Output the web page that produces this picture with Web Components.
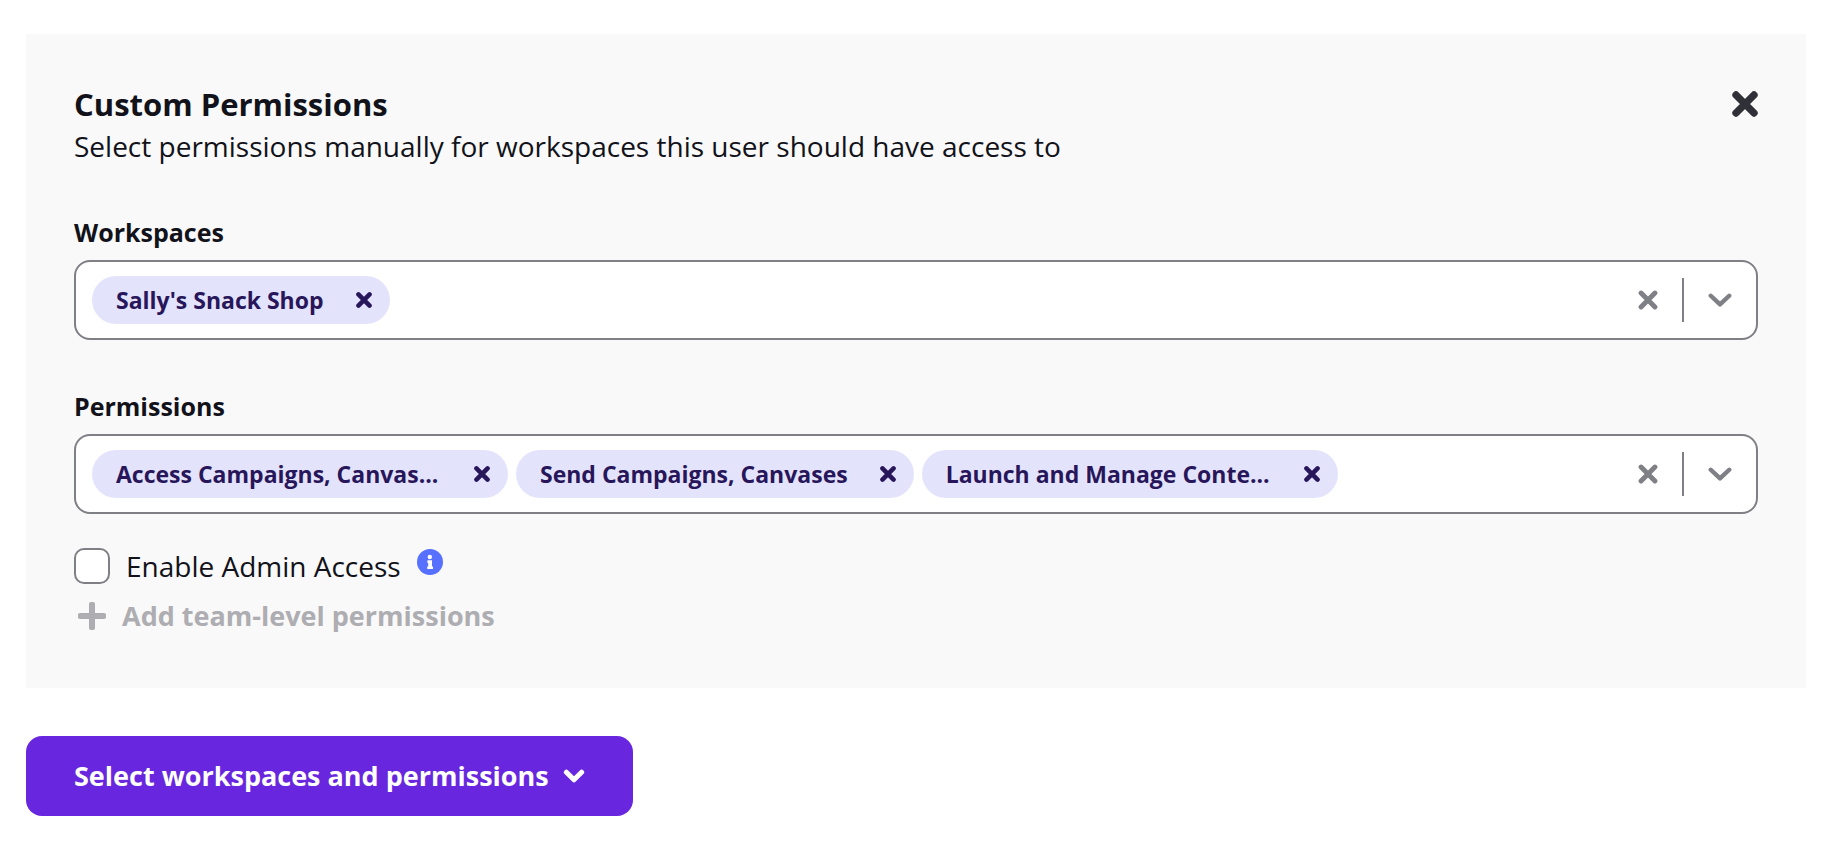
<!DOCTYPE html>
<html lang="en">
<head>
<meta charset="utf-8">
<title>Custom Permissions</title>
<style>
  body {
    margin: 0;
    background: #fff;
    color: #12121a;
    font-family: "Open Sans", "Noto Sans", sans-serif;
    font-size: 28px;
    line-height: 40px;
  }
</style>
</head>
<body>
<permissions-page></permissions-page>

<script>
const define = (name, html, setup) => {
  const template = document.createElement('template');
  template.innerHTML = `<style>*, *::before { box-sizing: border-box; } button { margin: 0; padding: 0; border: 0; background: none; font: inherit; color: inherit; cursor: pointer; } svg { display: block; }</style>` + html;
  customElements.define(name, class extends HTMLElement {
    connectedCallback() {
      if (this.shadowRoot) return;
      this.attachShadow({ mode: 'open' }).append(template.content.cloneNode(true));
      if (setup) setup(this, this.shadowRoot);
    }
  });
};

/* Cross, chevron, plus and info glyphs */
const glyphs = {
  cross: '<path d="M4 4 22 22M22 4 4 22" fill="none" stroke="currentColor" stroke-width="7.4" stroke-linecap="round"/>',
  'cross-light': '<path d="M4 4 22 22M22 4 4 22" fill="none" stroke="currentColor" stroke-width="6.4" stroke-linecap="round"/>',
  chevron: '<path d="M3 8.4 13 17.8 23 8.4" fill="none" stroke="currentColor" stroke-width="4.8" stroke-linecap="round" stroke-linejoin="round"/>',
  'chevron-bold': '<path d="M4 8.6 13 17.4 22 8.6" fill="none" stroke="currentColor" stroke-width="6" stroke-linecap="round" stroke-linejoin="round"/>',
  plus: '<path d="M0 12a1.8 1.8 0 0 1 1.8-1.8h8.4V1.8A1.8 1.8 0 0 1 12 0h2a1.8 1.8 0 0 1 1.8 1.8v8.4h8.4A1.8 1.8 0 0 1 26 12v2a1.8 1.8 0 0 1-1.8 1.8h-8.4v8.4A1.8 1.8 0 0 1 14 26h-2a1.8 1.8 0 0 1-1.8-1.8v-8.4H1.8A1.8 1.8 0 0 1 0 14z" fill="currentColor"/>',
  info: '<circle cx="13" cy="13" r="13" fill="currentColor"/><circle cx="12.8" cy="8" r="2.2" fill="#fff"/><path d="M10.4 11.2h4.6v6.2h1v2.7h-5.8v-2.7h1v-3.5h-.8z" fill="#fff"/>'
};
define('ui-icon', `
  <style>
    :host { display: block; flex: none; width: 26px; height: 26px; }
    svg { width: 100%; height: 100%; }
  </style>
  <svg viewBox="0 0 26 26" aria-hidden="true"></svg>`,
  (host, root) => { root.querySelector('svg').innerHTML = glyphs[host.getAttribute('name')]; });

define('tag-chip', `
  <style>
    :host { display: flex; align-items: center; gap: 32px; height: 48px; padding: 0 18px 0 24px; border-radius: 24px; background: #e4e3fc; color: #28165a; font-size: 23px; font-weight: 700; line-height: 32px; white-space: nowrap; }
    :host([clipped]) .label { width: 326px; }
    ui-icon { width: 16px; height: 16px; }
  </style>
  <span class="label"><slot></slot></span>
  <button type="button" aria-label="Remove"><ui-icon name="cross"></ui-icon></button>`);

define('multi-select', `
  <style>
    :host { display: flex; flex-direction: column; gap: 10px; }
    label { align-self: flex-start; font-size: 25px; font-weight: 700; line-height: 36px; }
    .box { display: flex; align-items: center; min-height: 80px; padding: 0 24px 0 16px; border: 2px solid #7f7f86; border-radius: 16px; background: #fff; color: #7f7f86; }
    .tags { display: flex; flex: 1; flex-wrap: wrap; gap: 8px; min-width: 0; }
    input { flex: 1; min-width: 40px; width: 40px; padding: 0; border: 0; outline: 0; background: none; font: inherit; }
    .divider { width: 2px; height: 44px; margin: 0 24px; background: #7f7f86; }
    .clear ui-icon { width: 20px; height: 20px; }
    .open ui-icon { width: 24px; height: 24px; }
  </style>
  <label for="search"></label>
  <div class="box">
    <div class="tags"><slot></slot><input id="search" type="text" role="combobox" aria-expanded="false"></div>
    <button class="clear" type="button" aria-label="Clear all"><ui-icon name="cross-light"></ui-icon></button>
    <span class="divider"></span>
    <button class="open" type="button" aria-label="Open list"><ui-icon name="chevron"></ui-icon></button>
  </div>`,
  (host, root) => { root.querySelector('label').textContent = host.getAttribute('label'); });

define('check-field', `
  <style>
    :host { display: flex; align-items: center; }
    input { appearance: none; flex: none; width: 36px; height: 36px; margin: 0 16px 0 0; border: 2px solid #7f7f86; border-radius: 10px; background: #fff; }
    input:checked { background: #6826df; }
    button { margin: 0 0 8px 16px; color: #5770ff; }
  </style>
  <input id="check" type="checkbox"><label for="check"><slot></slot></label>
  <button type="button" aria-label="More information"><ui-icon name="info"></ui-icon></button>`);

define('add-button', `
  <style>
    :host { display: flex; }
    button { display: flex; align-items: center; gap: 16px; padding-left: 4px; color: #adadb2; font-size: 27px; font-weight: 700; cursor: default; }
    ui-icon { width: 28px; height: 28px; }
  </style>
  <button type="button" disabled><ui-icon name="plus"></ui-icon><slot></slot></button>`);

define('permission-panel', `
  <style>
    :host { display: block; padding: 48px; background: #f9f9f9; }
    header { display: flex; justify-content: space-between; align-items: flex-start; margin-bottom: 48px; }
    h2 { margin: 0; font-size: 31px; font-weight: 700; line-height: 44px; }
    p { margin: 0; }
    header button { margin-top: 9px; color: #303038; }
    .body { display: flex; flex-direction: column; }
  </style>
  <header>
    <div><h2><slot name="title"></slot></h2><p><slot name="description"></slot></p></div>
    <button type="button" aria-label="Close"><ui-icon name="cross"></ui-icon></button>
  </header>
  <div class="body"><slot></slot></div>`);

define('menu-button', `
  <style>
    :host { display: flex; }
    button { display: flex; align-items: center; gap: 14px; min-height: 80px; padding: 0 48px; border-radius: 16px; background: #6826df; color: #fff; font-size: 27px; font-weight: 700; }
    ui-icon { width: 22px; height: 22px; }
  </style>
  <button type="button" aria-haspopup="menu"><slot></slot><ui-icon name="chevron-bold"></ui-icon></button>`);

define('permissions-page', `
  <style>
    :host { display: flex; flex-direction: column; gap: 48px; padding: 34px 30px 30px 26px; }
    multi-select + multi-select { margin-top: 48px; }
    check-field { margin-top: 32px; }
    add-button { margin: 10px 0 4px; }
  </style>
  <permission-panel>
    <span slot="title">Custom Permissions</span>
    <span slot="description">Select permissions manually for workspaces this user should have access to</span>
    <multi-select label="Workspaces">
      <tag-chip>Sally's Snack Shop</tag-chip>
    </multi-select>
    <multi-select label="Permissions">
      <tag-chip clipped>Access Campaigns, Canvas...</tag-chip>
      <tag-chip>Send Campaigns, Canvases</tag-chip>
      <tag-chip clipped>Launch and Manage Conte...</tag-chip>
    </multi-select>
    <check-field>Enable Admin Access</check-field>
    <add-button>Add team-level permissions</add-button>
  </permission-panel>
  <menu-button>Select workspaces and permissions</menu-button>`);
</script>
</body>
</html>
